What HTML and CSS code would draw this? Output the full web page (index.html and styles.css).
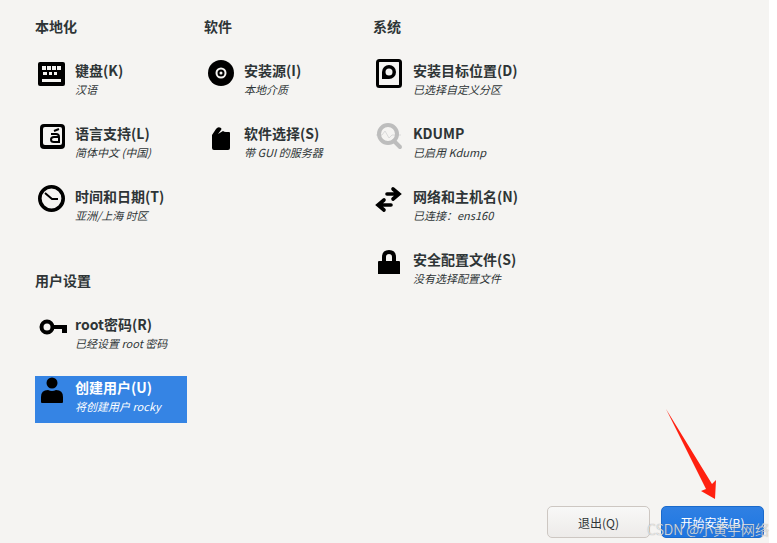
FILE: index.html
```html
<!DOCTYPE html>
<html lang="zh-CN">
<head>
    <meta charset="UTF-8">
    <meta name="viewport" content="width=device-width, initial-scale=1.0">
    <title>安装信息摘要</title>
    <link rel="stylesheet" href="styles.css">
</head>
<body>

    <div class="page">
        <main class="hub">
            <!-- Localization and users -->
            <div class="column">
                <section class="group">
                    <h2>本地化</h2>
                    <a href="#" class="spoke">
                        <svg class="icon" viewBox="0 0 32 32">
                            <rect x="3" y="3" width="27" height="24" rx="2"/>
                            <path fill="#f5f4f2" d="M7 7h4v4H7zM12 7h4v4h-4zM17 7h4v4h-4zM22 7h4v4h-4zM8 13h4v3H8zM14 13h3v3h-3zM19 13h3v3h-3zM7 20h19v3H7z"/>
                        </svg>
                        <span class="text"><strong>键盘(K)</strong><em>汉语</em></span>
                    </a>
                    <a href="#" class="spoke">
                        <svg class="icon" viewBox="0 0 32 32">
                            <rect x="5" y="2" width="25" height="25" rx="4"/>
                            <rect x="8" y="5" width="19" height="18" rx="2" fill="#f5f4f2"/>
                            <path fill="none" stroke="#000" stroke-width="2" d="M16 12h5q3 0 3 3v5h-5q-3 0-3-2.500t3-2.500h5M19 9l5-2"/>
                        </svg>
                        <span class="text"><strong>语言支持(L)</strong><em>简体中文 (中国)</em></span>
                    </a>
                    <a href="#" class="spoke">
                        <svg class="icon" viewBox="0 0 32 32">
                            <circle cx="16.500" cy="13.500" r="11.700" fill="none" stroke="#000" stroke-width="3.600"/>
                            <path fill="none" stroke="#000" stroke-width="2" d="M10 8l7 6h6"/>
                        </svg>
                        <span class="text"><strong>时间和日期(T)</strong><em>亚洲/上海 时区</em></span>
                    </a>
                </section>

                <section class="group">
                    <h2>用户设置</h2>
                    <a href="#" class="spoke">
                        <svg class="icon" viewBox="0 0 32 32">
                            <circle cx="12" cy="14" r="5.500" fill="none" stroke="#000" stroke-width="4"/>
                            <path d="M18 12h14v8h-5v-4h-9z"/>
                        </svg>
                        <span class="text"><strong>root密码(R)</strong><em>已经设置 root 密码</em></span>
                    </a>
                    <a href="#" class="spoke selected">
                        <svg class="icon" viewBox="0 0 32 32">
                            <circle cx="17" cy="7" r="5.500"/>
                            <path d="M6 26v-5q0-7 7-7 4 2 8 0 7 0 7 7v5q0 1-1 1H7q-1 0-1-1z"/>
                        </svg>
                        <span class="text"><strong>创建用户(U)</strong><em>将创建用户 rocky</em></span>
                    </a>
                </section>
            </div>

            <!-- Software -->
            <div class="column">
                <section class="group">
                    <h2>软件</h2>
                    <a href="#" class="spoke">
                        <svg class="icon" viewBox="0 0 32 32">
                            <circle cx="17" cy="14" r="13"/>
                            <circle cx="17" cy="14" r="4.500" fill="none" stroke="#f5f4f2" stroke-width="2"/>
                            <circle cx="17" cy="14" r="1.500" fill="#f5f4f2"/>
                        </svg>
                        <span class="text"><strong>安装源(I)</strong><em>本地介质</em></span>
                    </a>
                    <a href="#" class="spoke">
                        <svg class="icon" viewBox="0 0 32 32">
                            <path d="M8 13l4-6q2-3 5-1 1 1 0 2l-3 4 5-3q1 1 3 1h3q1 0 1 1v15q0 2-2 2H10q-2 0-2-2z"/>
                        </svg>
                        <span class="text"><strong>软件选择(S)</strong><em>带 GUI 的服务器</em></span>
                    </a>
                </section>
            </div>

            <!-- System -->
            <div class="column">
                <section class="group">
                    <h2>系统</h2>
                    <a href="#" class="spoke">
                        <svg class="icon" viewBox="0 0 32 32">
                            <rect x="4.500" y="1.500" width="23" height="26" rx="2" fill="none" stroke="#000" stroke-width="3"/>
                            <path d="M9 20v-7a7 7 0 1 1 7 7z"/>
                            <circle cx="16" cy="13" r="3.500" fill="#f5f4f2"/>
                        </svg>
                        <span class="text"><strong>安装目标位置(D)</strong><em>已选择自定义分区</em></span>
                    </a>
                    <a href="#" class="spoke">
                        <svg class="icon" viewBox="0 0 32 32" fill="none" stroke="#bdbdbd">
                            <path stroke="#dadada" d="M3 13h6l3-4 4 7 3-3h9"/>
                            <circle cx="15" cy="12" r="9" stroke-width="4"/>
                            <path stroke-width="4" stroke-linecap="round" d="M21 19l6 6"/>
                        </svg>
                        <span class="text"><strong>KDUMP</strong><em>已启用 Kdump</em></span>
                    </a>
                    <a href="#" class="spoke">
                        <svg class="icon" viewBox="0 0 32 32" fill="none" stroke="#000" stroke-width="3.600">
                            <path stroke-linecap="round" d="M14 9h12M20 4l6 5-6 5M18 20H6M11 15l-6 5 6 5"/>
                        </svg>
                        <span class="text"><strong>网络和主机名(N)</strong><em>已连接：ens160</em></span>
                    </a>
                    <a href="#" class="spoke">
                        <svg class="icon" viewBox="0 0 32 32">
                            <path fill="none" stroke="#000" stroke-width="4" d="M11 14V9q0-5 5-5t5 5v5"/>
                            <path d="M5 14q0-1 1-1h20q1 0 1 1v12H5z"/>
                        </svg>
                        <span class="text"><strong>安全配置文件(S)</strong><em>没有选择配置文件</em></span>
                    </a>
                </section>
            </div>
        </main>

        <footer class="actions">
            <button type="button" class="btn">退出(Q)</button>
            <button type="button" class="btn btn-primary">开始安装(B)</button>
        </footer>

        <!-- Pointer to the install button -->
        <svg class="pointer" viewBox="0 0 52 92">
            <path fill="#ff2010" d="M0 0l46 75 4-4-1 19-14-8 5-2z"/>
        </svg>
        <span class="watermark">CSDN @小黄宇网络</span>
    </div>

</body>
</html>
```
FILE: styles.css
```css
* {
    margin: 0;
    padding: 0;
    box-sizing: border-box;
}

body {
    font-family: "Noto Sans CJK SC", sans-serif;
    background-color: #fff;
    color: #2e3436;
    overflow: hidden;
}

.page {
    position: relative;
    display: flex;
    flex-direction: column;
    min-height: 100vh;
    margin-right: 8px;
    background-color: #f5f4f2;
}

/* Columns of settings */
.hub {
    display: flex;
    flex: 1;
    gap: 17px;
    padding: 14px 35px 0;
}

.column {
    min-width: 152px;
}

.group {
    display: flex;
    flex-direction: column;
    gap: 16px;
    margin-bottom: 36px;
}

.group h2 {
    font-size: 14px;
    line-height: 24px;
    margin-bottom: 5px;
}

.spoke {
    display: flex;
    gap: 8px;
    height: 47px;
    padding-right: 8px;
    color: inherit;
    text-decoration: none;
}

.spoke.selected {
    background-color: #3584e4;
    color: #fff;
}

.icon {
    width: 32px;
    height: 32px;
}

.text {
    display: flex;
    flex-direction: column;
    white-space: nowrap;
}

.text strong {
    font-size: 14px;
    line-height: 22px;
}

.text em {
    font-size: 11px;
    line-height: 16px;
}

/* Bottom buttons */
.actions {
    display: flex;
    justify-content: flex-end;
    gap: 11px;
    padding: 0 5px 5px;
}

.btn {
    width: 103px;
    height: 32px;
    font-family: inherit;
    font-size: 12px;
    color: #2e3436;
    background: linear-gradient(#f8f8f7, #edebe9);
    border: 1px solid #cdc7c2;
    border-radius: 5px;
}

.btn-primary {
    color: #fff;
    background: linear-gradient(#2f80e3, #1f76e1);
    border-color: #1b6acb;
}

.pointer {
    position: absolute;
    right: 51px;
    bottom: 42px;
    width: 52px;
    height: 92px;
}

.watermark {
    position: absolute;
    right: 0;
    bottom: 4px;
    font-size: 14px;
    font-weight: 300;
    line-height: 20px;
    color: rgba(255, 255, 255, 0.8);
    text-shadow: 0 0 1px #777;
    pointer-events: none;
}
```
